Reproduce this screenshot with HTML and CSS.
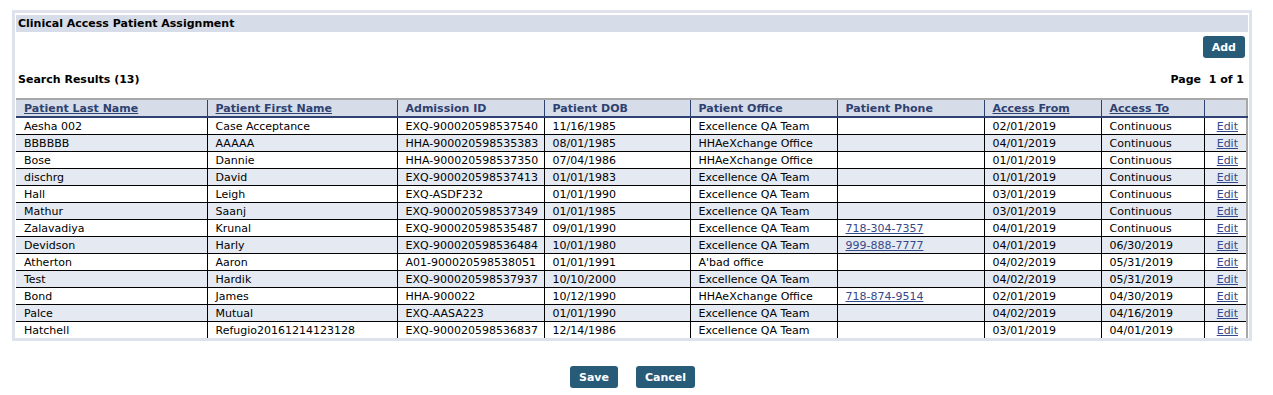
FILE: index.html
```html
<!DOCTYPE html>
<html lang="en">

<head>
    <meta charset="UTF-8">
    <title>Clinical Access Patient Assignment</title>
    <link rel="stylesheet" href="styles.css">
</head>

<body>
    <div class="panel">
        <div class="panel-title">Clinical Access Patient Assignment</div>
        <div class="toolbar">
            <button class="btn" type="button">Add</button>
        </div>
        <div class="results-bar">
            <span>Search Results (13)</span>
            <span>Page&nbsp; 1 of 1</span>
        </div>
        <table class="grid">
            <colgroup>
                <col style="width:191px">
                <col style="width:190px">
                <col style="width:147px">
                <col style="width:146px">
                <col style="width:147px">
                <col style="width:147px">
                <col style="width:117px">
                <col style="width:103px">
                <col>
            </colgroup>
            <thead>
                <tr>
                    <th><a href="#">Patient Last Name</a></th>
                    <th><a href="#">Patient First Name</a></th>
                    <th>Admission ID</th>
                    <th>Patient DOB</th>
                    <th>Patient Office</th>
                    <th>Patient Phone</th>
                    <th><a href="#">Access From</a></th>
                    <th><a href="#">Access To</a></th>
                    <th></th>
                </tr>
            </thead>
            <tbody>
                <tr>
                    <td>Aesha 002</td><td>Case Acceptance</td><td>EXQ-900020598537540</td><td>11/16/1985</td>
                    <td>Excellence QA Team</td><td></td><td>02/01/2019</td><td>Continuous</td><td class="edit"><a href="#">Edit</a></td>
                </tr>
                <tr>
                    <td>BBBBBB</td><td>AAAAA</td><td>HHA-900020598535383</td><td>08/01/1985</td>
                    <td>HHAeXchange Office</td><td></td><td>04/01/2019</td><td>Continuous</td><td class="edit"><a href="#">Edit</a></td>
                </tr>
                <tr>
                    <td>Bose</td><td>Dannie</td><td>HHA-900020598537350</td><td>07/04/1986</td>
                    <td>HHAeXchange Office</td><td></td><td>01/01/2019</td><td>Continuous</td><td class="edit"><a href="#">Edit</a></td>
                </tr>
                <tr>
                    <td>dischrg</td><td>David</td><td>EXQ-900020598537413</td><td>01/01/1983</td>
                    <td>Excellence QA Team</td><td></td><td>01/01/2019</td><td>Continuous</td><td class="edit"><a href="#">Edit</a></td>
                </tr>
                <tr>
                    <td>Hall</td><td>Leigh</td><td>EXQ-ASDF232</td><td>01/01/1990</td>
                    <td>Excellence QA Team</td><td></td><td>03/01/2019</td><td>Continuous</td><td class="edit"><a href="#">Edit</a></td>
                </tr>
                <tr>
                    <td>Mathur</td><td>Saanj</td><td>EXQ-900020598537349</td><td>01/01/1985</td>
                    <td>Excellence QA Team</td><td></td><td>03/01/2019</td><td>Continuous</td><td class="edit"><a href="#">Edit</a></td>
                </tr>
                <tr>
                    <td>Zalavadiya</td><td>Krunal</td><td>EXQ-900020598535487</td><td>09/01/1990</td>
                    <td>Excellence QA Team</td><td><a href="#">718-304-7357</a></td><td>04/01/2019</td><td>Continuous</td><td class="edit"><a href="#">Edit</a></td>
                </tr>
                <tr>
                    <td>Devidson</td><td>Harly</td><td>EXQ-900020598536484</td><td>10/01/1980</td>
                    <td>Excellence QA Team</td><td><a href="#">999-888-7777</a></td><td>04/01/2019</td><td>06/30/2019</td><td class="edit"><a href="#">Edit</a></td>
                </tr>
                <tr>
                    <td>Atherton</td><td>Aaron</td><td>A01-900020598538051</td><td>01/01/1991</td>
                    <td>A'bad office</td><td></td><td>04/02/2019</td><td>05/31/2019</td><td class="edit"><a href="#">Edit</a></td>
                </tr>
                <tr>
                    <td>Test</td><td>Hardik</td><td>EXQ-900020598537937</td><td>10/10/2000</td>
                    <td>Excellence QA Team</td><td></td><td>04/02/2019</td><td>05/31/2019</td><td class="edit"><a href="#">Edit</a></td>
                </tr>
                <tr>
                    <td>Bond</td><td>James</td><td>HHA-900022</td><td>10/12/1990</td>
                    <td>HHAeXchange Office</td><td><a href="#">718-874-9514</a></td><td>02/01/2019</td><td>04/30/2019</td><td class="edit"><a href="#">Edit</a></td>
                </tr>
                <tr>
                    <td>Palce</td><td>Mutual</td><td>EXQ-AASA223</td><td>01/01/1990</td>
                    <td>Excellence QA Team</td><td></td><td>04/02/2019</td><td>04/16/2019</td><td class="edit"><a href="#">Edit</a></td>
                </tr>
                <tr>
                    <td>Hatchell</td><td>Refugio20161214123128</td><td>EXQ-900020598536837</td><td>12/14/1986</td>
                    <td>Excellence QA Team</td><td></td><td>03/01/2019</td><td>04/01/2019</td><td class="edit"><a href="#">Edit</a></td>
                </tr>
            </tbody>
        </table>
    </div>

    <div class="actions">
        <button class="btn" type="button">Save</button>
        <button class="btn" type="button">Cancel</button>
    </div>
</body>

</html>
```

FILE: styles.css
```css
* {
    margin: 0;
    padding: 0;
    box-sizing: border-box;
}

body {
    font-family: "DejaVu Sans", Verdana, sans-serif;
    font-size: 11px;
    color: #000;
    background: #fff;
}

.panel {
    margin: 10px 0 0 12px;
    width: 1240px;
    border: 3px solid #dde2ec;
    padding: 2px 1px 0 1px;
}

.panel-title {
    background: #d6dce8;
    font-weight: bold;
    height: 17px;
    line-height: 17px;
    padding-left: 2px;
}

.toolbar {
    display: flex;
    justify-content: flex-end;
    padding: 4px 3px 0 0;
}

.btn {
    background: #275b78;
    color: #fff;
    font-family: "DejaVu Sans", Verdana, sans-serif;
    font-weight: bold;
    font-size: 11px;
    border: none;
    border-radius: 3px;
    height: 22px;
    padding: 0 9px;
    cursor: pointer;
}

.results-bar {
    display: flex;
    justify-content: space-between;
    font-weight: bold;
    padding: 15px 4px 0 2px;
    height: 40px;
    line-height: 13px;
}

.grid {
    width: 100%;
    border-collapse: collapse;
    table-layout: fixed;
    border-top: 2px solid #a8a8a8;
    border-right: 2px solid #a8a8a8;
}

.grid th {
    background: #d6dce8;
    color: #2e4170;
    text-align: left;
    font-weight: bold;
    height: 18px;
    padding: 0 8px;
    border-left: 1px solid #2e4170;
    border-bottom: 2px solid #2e4170;
}

.grid th:first-child {
    border-left: none;
}

.grid th a {
    color: #2e4170;
}

.grid td {
    height: 17px;
    padding: 1px 8px 0 8px;
    border-left: 1px solid #000;
    border-bottom: 1px solid #000;
    white-space: nowrap;
    overflow: hidden;
}

.grid td:first-child {
    border-left: none;
}

.grid tbody tr:nth-child(even) td {
    background: #e4e9f2;
}

.grid tbody tr:last-child td {
    border-bottom: none;
}

.grid td a {
    color: #34498a;
}

.grid td.edit {
    text-align: right;
}

.actions {
    display: flex;
    justify-content: center;
    gap: 18px;
    margin: 25px 8px 0 0;
}
```
